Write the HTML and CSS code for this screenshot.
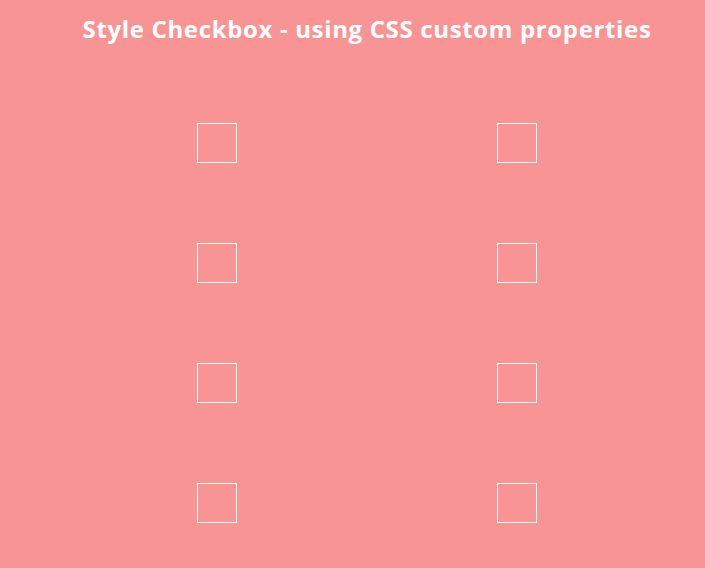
FILE: index.html
```html
<!DOCTYPE html>
<html lang="en">
<head>
  <meta charset="UTF-8">
  <title>Style Checkbox</title>
  <link rel="stylesheet" href="styles.css">
</head>
<body>
  <div class="container">
    <h1 class="title">Style Checkbox - using CSS custom properties</h1>
    <div class="grid">
      <label class="cell"><input type="checkbox" class="check"></label>
      <label class="cell"><input type="checkbox" class="check"></label>
      <label class="cell"><input type="checkbox" class="check"></label>
      <label class="cell"><input type="checkbox" class="check"></label>
      <label class="cell"><input type="checkbox" class="check"></label>
      <label class="cell"><input type="checkbox" class="check"></label>
      <label class="cell"><input type="checkbox" class="check"></label>
      <label class="cell"><input type="checkbox" class="check"></label>
    </div>
  </div>
</body>
</html>
```

FILE: styles.css
```css
:root {
  --bg: #f89594;
  --box-size: 40px;
  --box-border: #ffffff;
}

* {
  margin: 0;
  padding: 0;
  box-sizing: border-box;
}

body {
  background: var(--bg);
  font-family: 'Open Sans', sans-serif;
  min-height: 100vh;
}

.container {
  width: 600px;
  margin-left: 67px;
}

.title {
  color: #fff;
  font-size: 24px;
  font-weight: 700;
  line-height: 30px;
  letter-spacing: 0.65px;
  text-align: center;
  padding-top: 14px;
  white-space: nowrap;
}

.grid {
  display: grid;
  grid-template-columns: 300px 300px;
  grid-auto-rows: 120px;
  margin-top: 39px;
}

.cell {
  display: flex;
  justify-content: center;
  align-items: center;
}

.check {
  appearance: none;
  -webkit-appearance: none;
  width: var(--box-size);
  height: var(--box-size);
  border: 1px solid var(--box-border);
  background: transparent;
  cursor: pointer;
}
```
